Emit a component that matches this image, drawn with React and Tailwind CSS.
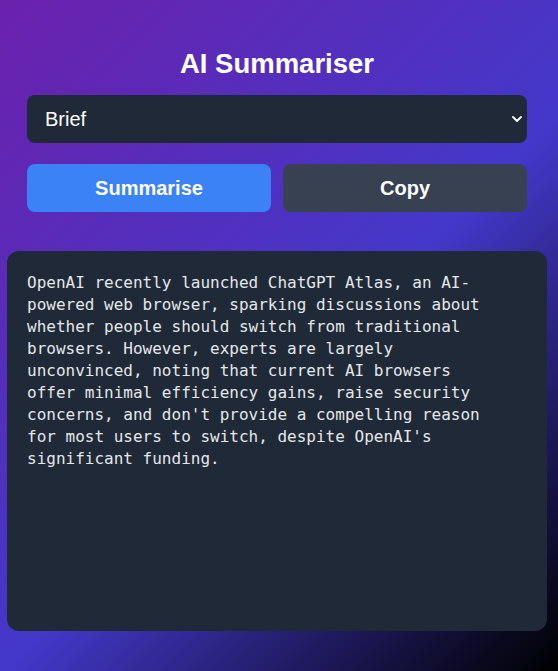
import { useState } from 'react'

const SUMMARY =
  "OpenAI recently launched ChatGPT Atlas, an AI-powered web browser, sparking discussions about whether people should switch from traditional browsers. However, experts are largely unconvinced, noting that current AI browsers offer minimal efficiency gains, raise security concerns, and don't provide a compelling reason for most users to switch, despite OpenAI's significant funding."

export default function App() {

  const [mode, setMode] = useState('brief')

  return (
    <div className="min-h-screen bg-[linear-gradient(135deg,#6b21ac_0%,#4338ca_55%,#000_100%)] font-['Liberation_Sans',Arial,sans-serif]">

      <div className="w-[554px] flex flex-col items-center pt-12">

        {/* TITLE */}
        <h1 className="text-[27.5px] leading-[31px] font-bold text-white">
          AI Summariser
        </h1>

        {/* CONTROLS */}
        <div className="w-[500px] mt-4">

          <div className="relative">
            <select
              value={mode}
              onChange={(e) => setMode(e.target.value)}
              className="w-full h-12 appearance-none rounded-lg bg-[#1f2937] text-white text-[20px] pl-[18px] pr-10 outline-none"
            >
              <option value="brief">Brief</option>
              <option value="detailed">Detailed</option>
              <option value="bullets">Bullet Points</option>
            </select>
            <svg
              className="absolute right-[5px] top-[21px] pointer-events-none"
              width="10"
              height="7"
              viewBox="0 0 10 7"
              fill="none"
            >
              <path d="M1 1l4 4 4-4" stroke="white" strokeWidth="1.8" strokeLinecap="round" strokeLinejoin="round" />
            </svg>
          </div>

          <div className="grid grid-cols-2 gap-3 mt-[21px]">
            <button className="h-12 rounded-lg bg-[#3b82f6] text-white text-[20px] font-bold">
              Summarise
            </button>
            <button className="h-12 rounded-lg bg-[#374151] text-white text-[20px] font-bold">
              Copy
            </button>
          </div>

        </div>

        {/* OUTPUT */}
        <div className="w-[540px] h-[380px] mt-[39px] rounded-xl bg-[#1f2937] pl-5 pr-[40px] pt-[21px]">
          <p className="font-['DejaVu_Sans_Mono',monospace] text-[16px] leading-[22px] text-[#e5e7eb] whitespace-pre-wrap">
            {SUMMARY}
          </p>
        </div>

      </div>

    </div>
  )
}
